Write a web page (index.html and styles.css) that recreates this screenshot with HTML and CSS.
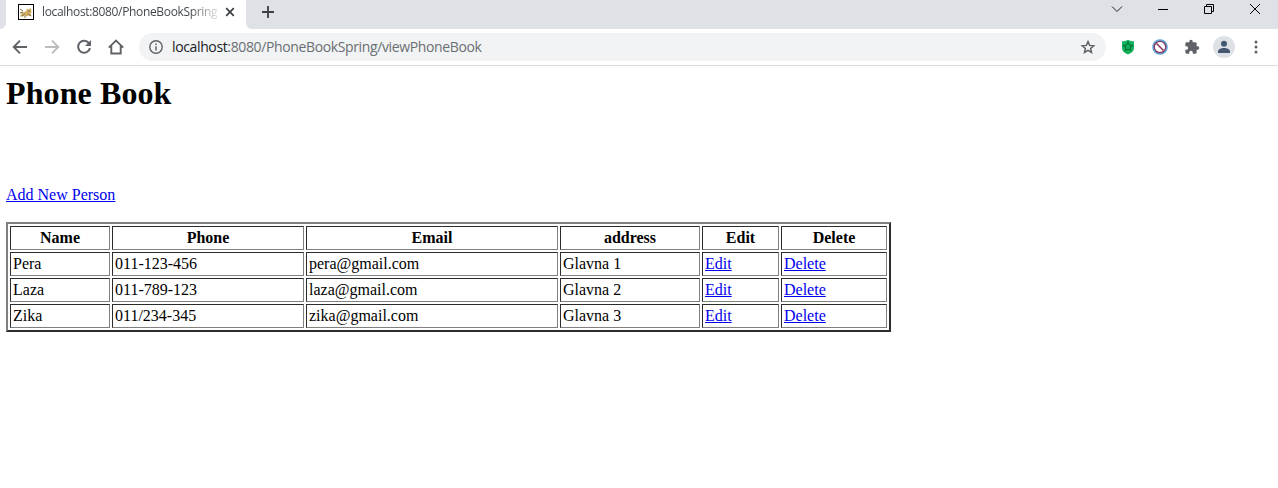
FILE: index.html
```html
<!DOCTYPE html>
<html lang="en">
<head>
<meta charset="utf-8">
<title>Phone Book</title>
<link rel="stylesheet" href="styles.css">
</head>
<body>
<header class="browser">
  <div class="tabstrip">
    <div class="edge"></div>
    <div class="tab">
      <svg class="favicon" width="16" height="16" viewBox="0 0 16 16"><rect x=".5" y=".5" width="15" height="15" fill="#fff" stroke="#000"/><path d="M2 12.500l2-4 4-1 1-3 1.500 1L13 4l.5 4-1 2 1.500 2.500-3-1-3 1-2-1-1 1z" fill="#cfae62"/><path d="M2 5l3 2M2 9l3-1M4 12l3-2M10 7h2M10 10l3 2M6 13h2" stroke="#85714a" fill="none"/></svg>
      <span class="tab-title">localhost:8080/PhoneBookSpring</span>
      <svg class="tab-close" width="10" height="10" viewBox="0 0 10 10"><path d="M1.200 1.200l7.600 7.600M8.800 1.200l-7.600 7.600" stroke="#3c4043" stroke-width="1.700"/></svg>
    </div>
    <div class="rest">
      <svg class="plus" width="12" height="12" viewBox="0 0 12 12"><path d="M6 0v12M0 6h12" stroke="#3c4043" stroke-width="1.800"/></svg>
      <div class="window-buttons">
        <svg width="12" height="12" viewBox="0 0 12 12"><path d="M1 3.500l5 5 5-5" fill="none" stroke="#222" stroke-width="1"/></svg>
        <svg width="12" height="12" viewBox="0 0 12 12"><path d="M1 6.500h10" stroke="#000"/></svg>
        <svg width="12" height="12" viewBox="0 0 12 12"><path d="M1.500 3.500h7v7h-7zM3.500 3.500v-2h7v7h-2" fill="none" stroke="#000"/></svg>
        <svg width="12" height="12" viewBox="0 0 12 12"><path d="M1 1l10 10M11 1L1 11" stroke="#000" stroke-width="1"/></svg>
      </div>
    </div>
  </div>
  <div class="toolbar">
    <nav class="nav">
      <svg width="16" height="16" viewBox="0 0 16 16"><path d="M15 8H2.500M8 1.700L1.700 8 8 14.300" fill="none" stroke="#5f6368" stroke-width="1.900"/></svg>
      <svg width="16" height="16" viewBox="0 0 16 16"><path d="M1 8h12.500M8 1.700L14.300 8 8 14.300" fill="none" stroke="#babcbe" stroke-width="1.900"/></svg>
      <svg width="16" height="16" viewBox="0 0 16 16"><path d="M13.200 4.500A6 6 0 1 0 14 9" fill="none" stroke="#5f6368" stroke-width="2"/><path d="M15 1v6H9z" fill="#5f6368"/></svg>
      <svg width="16" height="16" viewBox="0 0 16 16"><path d="M.8 8.600L8 1.500l7.200 7.100M3.300 7v7.500h9.400V7" fill="none" stroke="#5f6368" stroke-width="1.900"/></svg>
    </nav>
    <div class="omnibox">
      <svg width="14" height="14" viewBox="0 0 14 14"><circle cx="7" cy="7" r="6.200" fill="none" stroke="#5f6368" stroke-width="1.400"/><path d="M7 6.200v4.200M7 3.500v1.500" stroke="#5f6368" stroke-width="1.500"/></svg>
      <span class="url"><span class="host">localhost</span>:8080/PhoneBookSpring/viewPhoneBook</span>
      <svg class="star" width="16" height="16" viewBox="0 0 16 16"><path d="M8 2.600l1.600 3.800 4.100.4-3.100 2.700.9 4L8 11.400l-3.500 2.100.9-4-3.100-2.700 4.100-.4z" fill="none" stroke="#5f6368" stroke-width="1.500"/></svg>
    </div>
    <div class="extensions">
      <svg width="16" height="16" viewBox="0 0 16 16"><path d="M8 .8c2 1.200 4 1.500 6 1.500V9c0 3-2.500 5.200-6 6.500C4.500 14.200 2 12 2 9V2.300c2 0 4-.3 6-1.500z" fill="#12b35c"/><path d="M8 3.300l1.400 2.700 3 .4-2.200 2.100.6 3L8 10.100l-2.800 1.400.6-3-2.200-2.100 3-.4z" fill="none" stroke="#087039" stroke-width="1.100"/></svg>
      <svg width="16" height="16" viewBox="0 0 16 16"><circle cx="8" cy="8" r="7.800" fill="#5da5de"/><circle cx="8" cy="8" r="5.700" fill="#fff" stroke="#8e3a5c" stroke-width="1.300"/><path d="M4.500 4.500l7 7" stroke="#8e3a5c" stroke-width="1.600"/></svg>
      <svg width="16" height="16" viewBox="0 0 24 24"><path d="M20.500 11H19V7a2 2 0 0 0-2-2h-4V3.500a2.500 2.500 0 0 0-5 0V5H4a2 2 0 0 0-2 2v3.800h1.500a2.700 2.700 0 0 1 0 5.400H2V20a2 2 0 0 0 2 2h3.800v-1.500a2.700 2.700 0 0 1 5.400 0V22H17a2 2 0 0 0 2-2v-4h1.500a2.500 2.500 0 0 0 0-5z" fill="#5f6368"/></svg>
      <svg class="avatar" width="22" height="22" viewBox="0 0 22 22"><circle cx="11" cy="11" r="11" fill="#dee1e6"/><circle cx="11" cy="7.800" r="3" fill="#475672"/><path d="M5 17v-1.500c0-2.300 3-3.500 6-3.500s6 1.200 6 3.500V17z" fill="#475672"/></svg>
      <svg class="menu" width="4" height="16" viewBox="0 0 4 16"><g fill="#5f6368"><circle cx="2" cy="3" r="1.500"/><circle cx="2" cy="8" r="1.500"/><circle cx="2" cy="13" r="1.500"/></g></svg>
    </div>
  </div>
</header>
<main class="page">
  <h1 class="title">Phone Book</h1>
  <a class="link add" href="#">Add New Person</a>
  <table class="contacts">
    <colgroup><col class="c-name"><col class="c-phone"><col class="c-email"><col class="c-address"><col class="c-edit"><col class="c-delete"></colgroup>
    <tr><th>Name</th><th>Phone</th><th>Email</th><th>address</th><th>Edit</th><th>Delete</th></tr>
    <tr><td>Pera</td><td>011-123-456</td><td>pera@gmail.com</td><td>Glavna 1</td><td><a class="link" href="#">Edit</a></td><td><a class="link" href="#">Delete</a></td></tr>
    <tr><td>Laza</td><td>011-789-123</td><td>laza@gmail.com</td><td>Glavna 2</td><td><a class="link" href="#">Edit</a></td><td><a class="link" href="#">Delete</a></td></tr>
    <tr><td>Zika</td><td>011/234-345</td><td>zika@gmail.com</td><td>Glavna 3</td><td><a class="link" href="#">Edit</a></td><td><a class="link" href="#">Delete</a></td></tr>
  </table>
</main>
</body>
</html>
```
FILE: styles.css
```css
* { box-sizing: border-box; }
body { margin: 0; background: #fff; font-family: "Liberation Serif", serif; font-size: 16px; color: #000; overflow: hidden; }
svg { display: block; flex: none; }
.browser { font-family: "Open Sans", sans-serif; }
.tabstrip { display: flex; height: 29px; background: #fff; }
.edge { width: 6px; background: #dee1e6; border-bottom-right-radius: 6px; }
.tab { display: flex; width: 240px; height: 24px; padding-left: 12px; align-items: center; }
.tab-title { width: 176px; margin-left: 8px; white-space: nowrap; font-size: 12px; line-height: 18px; letter-spacing: -0.34px; color: #45494d; -webkit-mask-image: linear-gradient(to right, #000 84%, rgba(0, 0, 0, 0.15)); mask-image: linear-gradient(to right, #000 84%, rgba(0, 0, 0, 0.15)); }
.tab-close { margin-left: 7px; }
.rest { display: flex; flex: 1; justify-content: space-between; align-items: flex-start; padding: 6px 17px 0 16px; background: #dee1e6; border-bottom-left-radius: 6px; }
.window-buttons { display: flex; gap: 34px; margin-top: -3px; }
.toolbar { display: flex; align-items: center; height: 37px; border-bottom: 1px solid #dadce0; }
.nav { display: flex; gap: 16px; width: 139px; padding-left: 12px; }
.omnibox { display: flex; align-items: center; width: 967px; height: 28px; padding: 0 10px; border-radius: 14px; background: #f1f3f4; }
.url { margin-left: 9px; font-size: 14px; line-height: 20px; letter-spacing: -0.37px; color: #6b6f73; white-space: nowrap; }
.host { color: #202124; }
.star { margin-left: auto; }
.extensions { display: flex; align-items: center; gap: 16px; padding-left: 14px; }
.avatar { margin-left: -3px; }
.menu { margin: 0 0 0 3px; }
.page { padding: 9px 6px; }
.title { margin: 0; font-size: 32px; line-height: 37px; letter-spacing: 0.1px; }
.link { color: #0000ee; text-decoration: underline; }
.add { display: block; width: max-content; margin: 74px 0 18px; line-height: 18px; }
.contacts { width: 885px; table-layout: fixed; border: 2px solid; border-color: #808080 #2c2c2c #2c2c2c #808080; border-spacing: 2px; line-height: 18px; }
.contacts th, .contacts td { height: 24px; padding: 2px; border: 1px solid; border-color: #2c2c2c #808080 #808080 #2c2c2c; }
.c-name { width: 100px; }
.c-phone { width: 192px; }
.c-email { width: 252px; }
.c-address { width: 140px; }
.c-edit { width: 77px; }
.c-delete { width: 106px; }
```
